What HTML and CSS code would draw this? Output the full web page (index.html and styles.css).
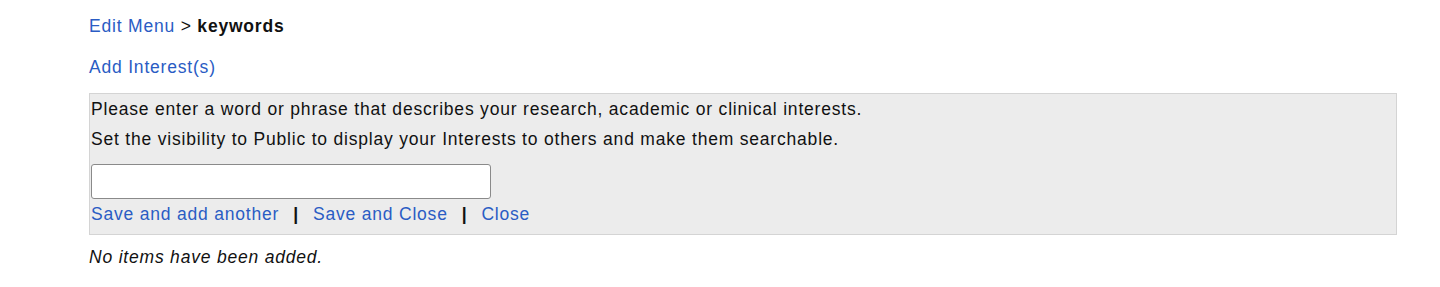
FILE: index.html
```html
<!DOCTYPE html>
<html>
<head>
<meta charset="utf-8">
<link rel="stylesheet" href="styles.css">
</head>
<body>
<div class="page">
  <div class="crumb"><a href="#">Edit Menu</a> &gt; <b>keywords</b></div>
  <div class="add"><a href="#">Add Interest(s)</a></div>
  <div class="panel">
    <div class="line">Please enter a word or phrase that describes your research, academic or clinical interests.</div>
    <div class="line">Set the visibility to Public to display your Interests to others and make them searchable.</div>
    <input class="field" type="text">
    <div class="actions">
      <a href="#">Save and add another</a>
      <span class="sep">|</span>
      <a href="#">Save and Close</a>
      <span class="sep">|</span>
      <a href="#">Close</a>
    </div>
  </div>
  <div class="empty">No items have been added.</div>
</div>
</body>
</html>
```
FILE: styles.css
```css
html, body { margin: 0; padding: 0; background: #fff; }
body {
  font-family: "Liberation Sans", Arial, Helvetica, sans-serif;
  font-size: 17.5px;
  letter-spacing: 0.8px;
  color: #111;
}
a { color: #2a5cc4; text-decoration: none; }
.page { padding: 15px 43px 0 89px; }
.crumb { line-height: 22px; }
.crumb b { font-weight: bold; }
.add { margin-top: 19px; line-height: 22px; }
.panel {
  margin-top: 15px;
  background: #ececec;
  border: 1px solid #d4d4d4;
  padding: 0 0 6px 1px;
}
.line { line-height: 30px; }
.field {
  display: block;
  margin-top: 10px;
  width: 400px;
  height: 35px;
  box-sizing: border-box;
  border: 1px solid #8a8a8a;
  border-radius: 3px;
  background: #fff;
  padding: 0 6px;
  font: inherit;
}
.actions { line-height: 28px; margin-top: 1px; display: flex; }
.sep { color: #111; font-weight: bold; margin: 0 14px; }
.empty { font-style: italic; margin-top: 11px; line-height: 22px; }
```
